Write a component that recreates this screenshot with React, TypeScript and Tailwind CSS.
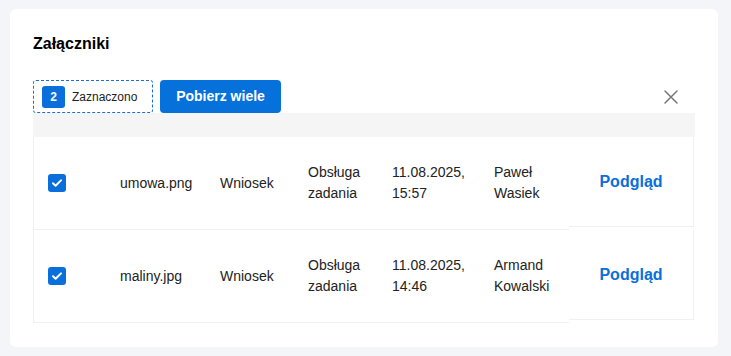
import React from "react";

interface Attachment {
  id: number;
  name: string;
  type: string;
  source: string[];
  date: string[];
  author: string[];
}

const rows: Attachment[] = [
  {
    id: 1,
    name: "umowa.png",
    type: "Wniosek",
    source: ["Obsługa", "zadania"],
    date: ["11.08.2025,", "15:57"],
    author: ["Paweł", "Wasiek"],
  },
  {
    id: 2,
    name: "maliny.jpg",
    type: "Wniosek",
    source: ["Obsługa", "zadania"],
    date: ["11.08.2025,", "14:46"],
    author: ["Armand", "Kowalski"],
  },
];

const Checkbox = () => (
  <span className="flex h-[18px] w-[18px] items-center justify-center rounded-[3px] bg-[#0a6fdb]">
    <svg width="12" height="12" viewBox="0 0 12 12" fill="none">
      <path d="M2 6.3l2.6 2.5L10 3.4" stroke="white" strokeWidth="2" strokeLinecap="round" strokeLinejoin="round" />
    </svg>
  </span>
);

const Lines = ({ lines }: { lines: string[] }) => (
  <div className="leading-[21px]">
    {lines.map((l) => (
      <div key={l}>{l}</div>
    ))}
  </div>
);

export default function App() {
  return (
    <div className="min-h-[356px] bg-[#f4f5f9] px-[10px] pt-[9px] pb-[9px] font-['Liberation_Sans',Arial,sans-serif] text-[#222]">
      <div className="w-[708px] rounded-[6px] bg-white px-[23px] pt-[25px] pb-[24px]">
        <h2 className="text-[16px] font-bold leading-[20px] text-black">Załączniki</h2>

        {/* Toolbar */}
        <div className="mt-[26px] flex h-[33px] items-center gap-[7px] pr-[8px]">
          <div className="flex h-[33px] w-[120px] items-center gap-[7px] rounded-[3px] border border-dashed border-[#1a6fd6] pl-[8px]">
            <span className="flex h-[22px] w-[23px] items-center justify-center rounded-[3px] bg-[#0a6fdb] text-[12px] font-bold text-white">
              2
            </span>
            <span className="text-[12px] text-[#222]">Zaznaczono</span>
          </div>
          <button className="h-[33px] w-[121px] rounded-[4px] bg-[#0670db] text-[14px] font-bold text-white">
            Pobierz wiele
          </button>
          <button className="ml-auto flex h-[32px] w-[32px] items-center justify-center">
            <svg width="16" height="16" viewBox="0 0 16 16" fill="none">
              <path d="M2 2l12 12M14 2L2 14" stroke="#777" strokeWidth="1.5" strokeLinecap="round" />
            </svg>
          </button>
        </div>

        {/* Table */}
        <div className="h-[24px] bg-[#f5f5f5]" />
        <div className="border-l border-[#f0f0f0]">
          {rows.map((r) => (
            <div
              key={r.id}
              className="grid h-[93px] grid-cols-[86px_100px_88px_84px_102px_75px_125px] text-[14px]"
            >
              <div className="flex items-center border-b border-[#f0f0f0] pl-[14px]">
                <Checkbox />
              </div>
              <div className="flex items-center border-b border-[#f0f0f0]">{r.name}</div>
              <div className="flex items-center border-b border-[#f0f0f0]">{r.type}</div>
              <div className="flex items-center border-b border-[#f0f0f0]">
                <Lines lines={r.source} />
              </div>
              <div className="flex items-center border-b border-[#f0f0f0]">
                <Lines lines={r.date} />
              </div>
              <div className="flex items-center border-b border-[#f0f0f0]">
                <Lines lines={r.author} />
              </div>
              <div className="flex h-[90px] items-center justify-center border-r border-b border-[#f0f0f0]">
                <a className="text-[16px] font-bold text-[#0a6fdb]">Podgląd</a>
              </div>
            </div>
          ))}
        </div>
      </div>
    </div>
  );
}
